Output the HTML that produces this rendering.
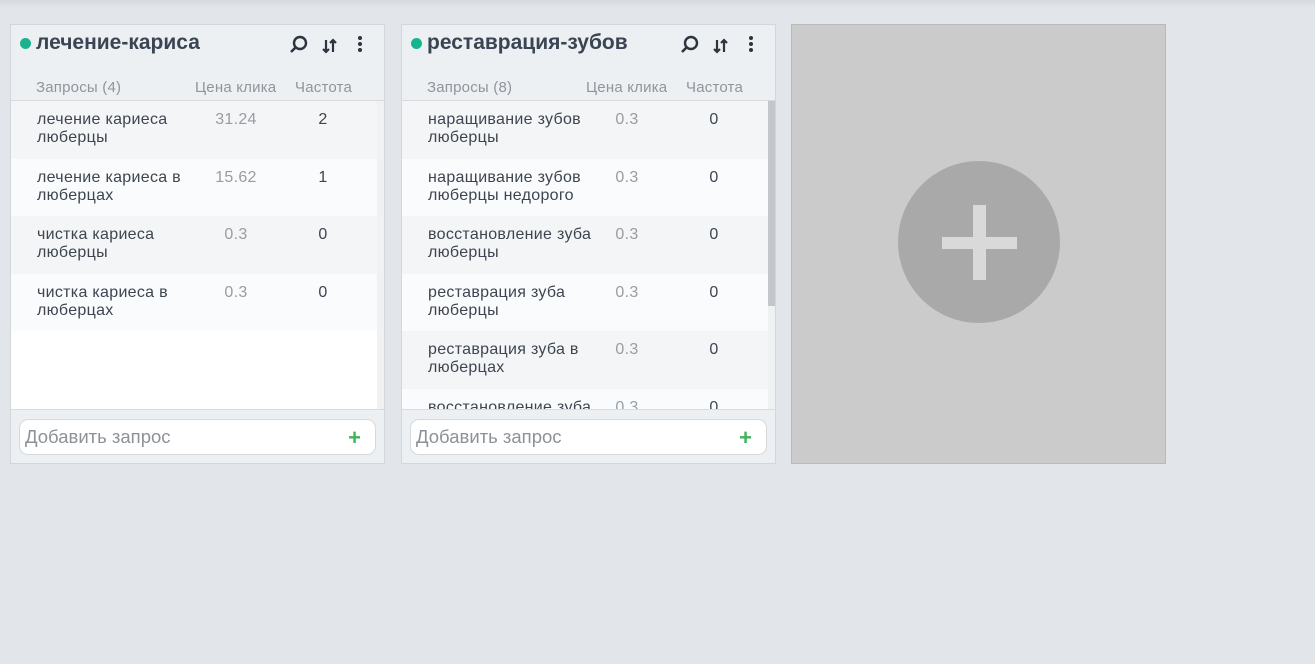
<!DOCTYPE html>
<html><head><meta charset="utf-8"><style>
*{box-sizing:border-box;margin:0;padding:0}
body{width:1315px;height:664px;background:#e2e5e9;font-family:"Liberation Sans","DejaVu Sans",sans-serif;position:relative;overflow:hidden}
.top{position:absolute;left:0;top:0;width:1315px;height:8px;background:linear-gradient(#d6d9dd,#e2e5e9)}
.card{position:absolute;top:24px;width:375px;height:440px;background:#edf0f2;border:1px solid #d3d6da}
.hd{position:absolute;left:0;top:0;width:100%;height:75px}
.dot{position:absolute;left:9px;top:13px;width:11px;height:11px;border-radius:50%;background:#19b48e}
.title{position:absolute;left:25px;top:6px;font-size:21px;font-weight:bold;color:#3a4452}
.ic{position:absolute;top:10px}
.cols{position:absolute;top:54px;font-size:15px;color:#8e959c;letter-spacing:0.2px}
.list{position:absolute;left:0;top:75px;width:373px;height:309px;background:#fff;border-top:1px solid #d8dbde;overflow:hidden}
.row{position:relative;height:57.5px;font-size:16px;color:#3d4550;letter-spacing:0.3px}
.row:nth-child(odd){background:#f4f5f6}
.row:nth-child(even){background:#fafbfc}
.q{position:absolute;left:26px;top:10px;width:175px;line-height:18px}
.p{position:absolute;left:180px;width:90px;text-align:center;top:10px;color:#979da3}
.f{position:absolute;left:272px;width:80px;text-align:center;top:10px}
.sb{position:absolute;right:0;top:0;width:7px;height:100%;background:#f0f1f2}
.ft{position:absolute;left:0;top:384px;width:373px;height:54px;border-top:1px solid #d8dbde}
.in{position:absolute;left:8px;top:9px;width:357px;height:36px;background:#fff;border:1px solid #d6d9dc;border-radius:9px;font-size:18.5px;color:#8c9298;padding:6px 5px}
.plus{position:absolute;right:14px;top:5px;color:#3fb25a;font-size:22px;font-weight:bold}
.add{position:absolute;left:791px;top:24px;width:375px;height:440px;background:#cbcbcb;border:1px solid #b9b9b9}
.circ{position:absolute;left:106px;top:136px;width:162px;height:162px;border-radius:50%;background:#a9a9a9}
.h{position:absolute;left:44px;top:76px;width:75px;height:12px;background:#d9d9d9}
.v{position:absolute;left:75px;top:44px;width:13px;height:75px;background:#d9d9d9}
</style></head><body>
<div class="top"></div>

<div class="card" style="left:10px">
 <div class="hd">
  <div class="dot"></div><div class="title">лечение-кариса</div>
  <svg class="ic" style="left:278px" width="20" height="20" viewBox="0 0 20 20"><circle cx="11" cy="8" r="6" fill="none" stroke="#2c3440" stroke-width="2.4"/><path d="M7 12L2 17" stroke="#2c3440" stroke-width="2.6"/></svg>
  <svg class="ic" style="left:310px;top:12px" width="18" height="18" viewBox="0 0 18 18"><path d="M5 3V15M2 12L5 15L8 12M12 15V3M9 6L12 3L15 6" fill="none" stroke="#2c3440" stroke-width="2.2"/></svg>
  <svg class="ic" style="left:346px" width="6" height="18" viewBox="0 0 6 18"><circle cx="3" cy="3" r="2" fill="#2c3440"/><circle cx="3" cy="9" r="2" fill="#2c3440"/><circle cx="3" cy="15" r="2" fill="#2c3440"/></svg>
  <div class="cols" style="left:25px">Запросы (4)</div>
  <div class="cols" style="left:184px">Цена клика</div>
  <div class="cols" style="left:284px">Частота</div>
 </div>
 <div class="list">
  <div class="row"><div class="q">лечение кариеса люберцы</div><div class="p">31.24</div><div class="f">2</div></div>
  <div class="row"><div class="q">лечение кариеса в люберцах</div><div class="p">15.62</div><div class="f">1</div></div>
  <div class="row"><div class="q">чистка кариеса люберцы</div><div class="p">0.3</div><div class="f">0</div></div>
  <div class="row"><div class="q">чистка кариеса в люберцах</div><div class="p">0.3</div><div class="f">0</div></div>
  <div class="sb"></div>
 </div>
 <div class="ft"><div class="in">Добавить запрос<span class="plus">+</span></div></div>
</div>

<div class="card" style="left:401px">
 <div class="hd">
  <div class="dot"></div><div class="title">реставрация-зубов</div>
  <svg class="ic" style="left:278px" width="20" height="20" viewBox="0 0 20 20"><circle cx="11" cy="8" r="6" fill="none" stroke="#2c3440" stroke-width="2.4"/><path d="M7 12L2 17" stroke="#2c3440" stroke-width="2.6"/></svg>
  <svg class="ic" style="left:310px;top:12px" width="18" height="18" viewBox="0 0 18 18"><path d="M5 3V15M2 12L5 15L8 12M12 15V3M9 6L12 3L15 6" fill="none" stroke="#2c3440" stroke-width="2.2"/></svg>
  <svg class="ic" style="left:346px" width="6" height="18" viewBox="0 0 6 18"><circle cx="3" cy="3" r="2" fill="#2c3440"/><circle cx="3" cy="9" r="2" fill="#2c3440"/><circle cx="3" cy="15" r="2" fill="#2c3440"/></svg>
  <div class="cols" style="left:25px">Запросы (8)</div>
  <div class="cols" style="left:184px">Цена клика</div>
  <div class="cols" style="left:284px">Частота</div>
 </div>
 <div class="list">
  <div class="row"><div class="q">наращивание зубов люберцы</div><div class="p">0.3</div><div class="f">0</div></div>
  <div class="row"><div class="q">наращивание зубов люберцы недорого</div><div class="p">0.3</div><div class="f">0</div></div>
  <div class="row"><div class="q">восстановление зуба люберцы</div><div class="p">0.3</div><div class="f">0</div></div>
  <div class="row"><div class="q">реставрация зуба люберцы</div><div class="p">0.3</div><div class="f">0</div></div>
  <div class="row"><div class="q">реставрация зуба в люберцах</div><div class="p">0.3</div><div class="f">0</div></div>
  <div class="row"><div class="q">восстановление зуба</div><div class="p">0.3</div><div class="f">0</div></div>
  <div class="sb"><div style="height:205px;background:#c3c6cb"></div></div>
 </div>
 <div class="ft"><div class="in">Добавить запрос<span class="plus">+</span></div></div>
</div>

<div class="add"><div class="circ"><div class="h"></div><div class="v"></div></div></div>
</body></html>
